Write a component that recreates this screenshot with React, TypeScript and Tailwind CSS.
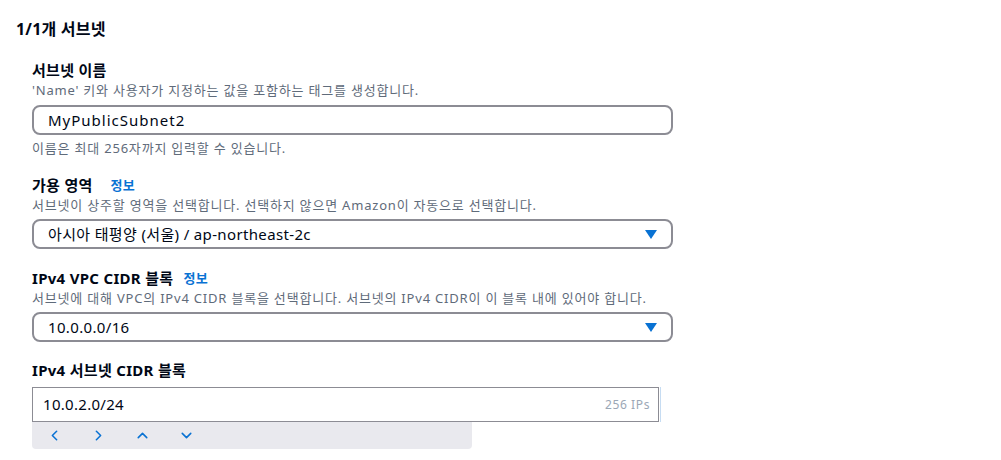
import { ChevronDown, ChevronLeft, ChevronRight, ChevronUp } from "lucide-react";

const font = { fontFamily: '"Noto Sans", "Noto Sans CJK KR", sans-serif' };

function Label({ text, infoGap }: { text: string; infoGap?: string }) {
  return (
    <div className="flex items-center h-[22px] text-[15px] font-bold text-[#000716] leading-[22px] tracking-[0.3px]">
      <span>{text}</span>
      {infoGap && <span className={`${infoGap} text-[13px] text-[#0972d3]`}>정보</span>}
    </div>
  );
}

function Desc({ text }: { text: string }) {
  return <div className="h-[18px] leading-[18px] text-[13px] text-[#5f6b7a] tracking-[0.8px]">{text}</div>;
}

function Select({ value }: { value: string }) {
  return (
    <div className="flex items-center justify-between h-[30px] w-[641px] border-2 border-[#8c8c94] rounded-[8px] pl-[14px] pr-[14px] text-[15px] text-[#000716]">
      <span className="tracking-[0.35px]">{value}</span>
      <svg width="12" height="9" viewBox="0 0 12 9">
        <path d="M0 0 H12 L6 9 Z" fill="#0972d3" />
      </svg>
    </div>
  );
}

export default function App() {
  return (
    <div className="w-[1001px] h-[460px] bg-white overflow-hidden" style={font}>
      <div className="pl-4 pt-[18px]">
        <h1 className="h-[22px] leading-[22px] text-[16px] font-bold text-[#000716] tracking-[0.2px]">1/1개 서브넷</h1>
      </div>

      <div className="pl-[32px]">
        {/* Subnet name */}
        <div className="mt-[19px]">
          <Label text="서브넷 이름" />
          <Desc text="'Name' 키와 사용자가 지정하는 값을 포함하는 태그를 생성합니다." />
          <div className="mt-[6px] flex items-center h-[30px] w-[641px] border-2 border-[#8c8c94] rounded-[8px] pl-[14px] text-[15px] text-[#000716] tracking-[1px]">
            MyPublicSubnet2
          </div>
          <div className="mt-[4px]">
            <Desc text="이름은 최대 256자까지 입력할 수 있습니다." />
          </div>
        </div>

        {/* Availability zone */}
        <div className="mt-[17px]">
          <Label text="가용 영역" infoGap="ml-[18px]" />
          <Desc text="서브넷이 상주할 영역을 선택합니다. 선택하지 않으면 Amazon이 자동으로 선택합니다." />
          <div className="mt-[5px]">
            <Select value="아시아 태평양 (서울) / ap-northeast-2c" />
          </div>
        </div>

        {/* VPC CIDR */}
        <div className="mt-[18px]">
          <Label text="IPv4 VPC CIDR 블록" infoGap="ml-[10px]" />
          <Desc text="서브넷에 대해 VPC의 IPv4 CIDR 블록을 선택합니다. 서브넷의 IPv4 CIDR이 이 블록 내에 있어야 합니다." />
          <div className="mt-[5px]">
            <Select value="10.0.0.0/16" />
          </div>
        </div>

        {/* Subnet CIDR */}
        <div className="mt-[17px]">
          <Label text="IPv4 서브넷 CIDR 블록" />
          <div className="mt-[6px] flex items-start">
            <div>
              <div className="flex items-center justify-between h-[35px] w-[627px] border border-[#8c8c94] pl-[10px] pr-[8px] text-[15px] text-[#000716]">
                <span className="tracking-[0.3px]">10.0.2.0/24</span>
                <span className="text-[12px] text-[#9ba7b6] tracking-[0.6px]">256 IPs</span>
              </div>
              <div className="flex items-center h-[27px] w-[440px] bg-[#e9e9ee] rounded-b-[4px] pl-[14px] gap-[27px] text-[#0972d3]">
                <ChevronLeft size={17} strokeWidth={2.2} />
                <ChevronRight size={17} strokeWidth={2.2} />
                <ChevronUp size={17} strokeWidth={2.2} />
                <ChevronDown size={17} strokeWidth={2.2} />
              </div>
            </div>
            <div className="ml-[1px] w-[1px] h-[35px] bg-[#c6dcf2]" />
          </div>
        </div>
      </div>
    </div>
  );
}
